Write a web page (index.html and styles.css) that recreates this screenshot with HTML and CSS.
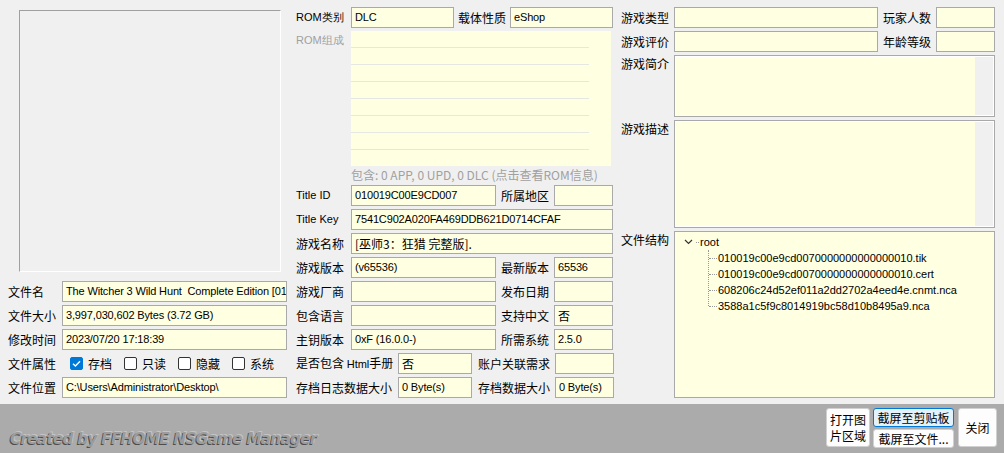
FILE: index.html
```html
<!DOCTYPE html>
<html>
<head>
	<meta name="viewport" content="width=device-width, initial-scale=1.0">
	<link rel="stylesheet" href="styles.css">
	<title>NSGame Manager</title>
</head>
<body>
	<div class="main">
		<!-- left: picture and file info -->
		<div class="col-left">
			<div class="picture"></div>

			<div class="row">
				<span class="lbl lbl-left">文件名</span>
				<div class="field f-left">The Witcher 3 Wild Hunt&nbsp; Complete Edition [01</div>
			</div>
			<div class="row">
				<span class="lbl lbl-left">文件大小</span>
				<div class="field f-left">3,997,030,602 Bytes (3.72 GB)</div>
			</div>
			<div class="row">
				<span class="lbl lbl-left">修改时间</span>
				<div class="field f-left">2023/07/20 17:18:39</div>
			</div>
			<div class="row">
				<span class="lbl lbl-left">文件属性</span>
				<div class="checks">
					<label class="chk"><span class="box checked"><svg width="13" height="13" viewBox="0 0 13 13"><path d="M3 6.8 L5.4 9.1 L10 4.2" fill="none" stroke="#fff" stroke-width="1.4"/></svg></span>存档</label>
					<label class="chk"><span class="box"></span>只读</label>
					<label class="chk"><span class="box"></span>隐藏</label>
					<label class="chk"><span class="box"></span>系统</label>
				</div>
			</div>
			<div class="row">
				<span class="lbl lbl-left">文件位置</span>
				<div class="field f-left">C:\Users\Administrator\Desktop\</div>
			</div>
		</div>

		<!-- middle: rom info -->
		<div class="col-mid">
			<div class="row">
				<span class="lbl lbl-mid latin">ROM类别</span>
				<div class="field f-half">DLC</div>
				<span class="lbl lbl-pair">载体性质</span>
				<div class="field f-half">eShop</div>
			</div>
			<div class="rom-block">
				<span class="lbl lbl-mid latin grey">ROM组成</span>
				<div class="rom-list">
					<div class="rom-line"></div>
					<div class="rom-line"></div>
					<div class="rom-line"></div>
					<div class="rom-line"></div>
					<div class="rom-line"></div>
					<div class="rom-line"></div>
					<div class="rom-line"></div>
				</div>
			</div>
			<div class="rom-info">包含: 0 APP, 0 UPD, 0 DLC (点击查看ROM信息)</div>

			<div class="row">
				<span class="lbl lbl-mid latin">Title ID</span>
				<div class="field f-mid">010019C00E9CD007</div>
				<span class="lbl lbl-side">所属地区</span>
				<div class="field f-small"></div>
			</div>
			<div class="row">
				<span class="lbl lbl-mid latin">Title Key</span>
				<div class="field f-full">7541C902A020FA469DDB621D0714CFAF</div>
			</div>
			<div class="row">
				<span class="lbl lbl-mid">游戏名称</span>
				<div class="field f-full cjk">[巫师3：狂猎 完整版].</div>
			</div>
			<div class="row">
				<span class="lbl lbl-mid">游戏版本</span>
				<div class="field f-mid">(v65536)</div>
				<span class="lbl lbl-side">最新版本</span>
				<div class="field f-small">65536</div>
			</div>
			<div class="row">
				<span class="lbl lbl-mid">游戏厂商</span>
				<div class="field f-mid"></div>
				<span class="lbl lbl-side">发布日期</span>
				<div class="field f-small"></div>
			</div>
			<div class="row">
				<span class="lbl lbl-mid">包含语言</span>
				<div class="field f-mid"></div>
				<span class="lbl lbl-side">支持中文</span>
				<div class="field f-small cjk">否</div>
			</div>
			<div class="row">
				<span class="lbl lbl-mid">主钥版本</span>
				<div class="field f-mid">0xF (16.0.0-)</div>
				<span class="lbl lbl-side">所需系统</span>
				<div class="field f-small">2.5.0</div>
			</div>
			<div class="row">
				<span class="lbl lbl-wide">是否包含 <span class="latin">Html</span>手册</span>
				<div class="field f-tiny cjk">否</div>
				<span class="lbl lbl-side2">账户关联需求</span>
				<div class="field f-small"></div>
			</div>
			<div class="row">
				<span class="lbl lbl-wide">存档日志数据大小</span>
				<div class="field f-tiny">0 Byte(s)</div>
				<span class="lbl lbl-side2">存档数据大小</span>
				<div class="field f-small">0 Byte(s)</div>
			</div>
		</div>

		<!-- right: game info and file tree -->
		<div class="col-right">
			<div class="row">
				<span class="lbl lbl-right">游戏类型</span>
				<div class="field f-right"></div>
				<span class="lbl lbl-right2">玩家人数</span>
				<div class="field f-small"></div>
			</div>
			<div class="row">
				<span class="lbl lbl-right">游戏评价</span>
				<div class="field f-right"></div>
				<span class="lbl lbl-right2">年龄等级</span>
				<div class="field f-small"></div>
			</div>
			<div class="area-row intro">
				<span class="lbl lbl-right">游戏简介</span>
				<div class="memo"><div class="scroll"></div></div>
			</div>
			<div class="area-row desc">
				<span class="lbl lbl-right">游戏描述</span>
				<div class="memo"><div class="scroll"></div></div>
			</div>
			<div class="area-row tree-row">
				<span class="lbl lbl-right">文件结构</span>
				<div class="tree">
					<div class="node-root">
						<svg class="chev" width="9" height="6" viewBox="0 0 9 6"><path d="M1 1 L4.5 4.5 L8 1" fill="none" stroke="#333" stroke-width="1.2"/></svg>
						<span class="dots-short"></span>root
					</div>
					<ul class="children">
						<li>010019c00e9cd0070000000000000010.tik</li>
						<li>010019c00e9cd0070000000000000010.cert</li>
						<li>608206c24d52ef011a2dd2702a4eed4e.cnmt.nca</li>
						<li>3588a1c5f9c8014919bc58d10b8495a9.nca</li>
					</ul>
				</div>
			</div>
		</div>
	</div>

	<div class="footer">
		<div class="credit">Created by FFHOME NSGame Manager</div>
		<div class="buttons">
			<button class="btn btn-open">打开图<br>片区域</button>
			<div class="btn-stack">
				<button class="btn btn-shot focused">截屏至剪贴板</button>
				<button class="btn btn-shot">截屏至文件...</button>
			</div>
			<button class="btn btn-close">关闭</button>
		</div>
	</div>
</body>
</html>
```

FILE: styles.css
```css
*{
	margin: 0;
	padding: 0;
	box-sizing: border-box;
}
body{
	background-color: #f0f0f0;
	font-family: "Noto Sans CJK SC", "Liberation Sans", sans-serif;
	font-size: 12px;
	color: #000;
	width: 1004px;
	height: 453px;
	overflow: hidden;
}
.main{
	display: flex;
	height: 404px;
}
.col-left{
	width: 288px;
	padding-left: 8px;
}
.col-mid{
	width: 317px;
	margin-left: 8px;
	padding-top: 7px;
}
.col-right{
	width: 374px;
	margin-left: 8px;
	padding-top: 7px;
}
.picture{
	width: 262px;
	height: 262px;
	margin: 10px 0 9px 11px;
	border-left: 1px solid #a0a0a0;
	border-top: 1px solid #a0a0a0;
	border-right: 1px solid #fff;
	border-bottom: 1px solid #fff;
}
.row{
	display: flex;
	align-items: center;
	height: 21px;
	margin-bottom: 3px;
}
.lbl{
	white-space: nowrap;
	line-height: 21px;
	flex-shrink: 0;
}
.latin{
	font-family: "Liberation Sans", sans-serif;
	font-size: 11px;
}
.lbl .latin{
	font-size: 11px;
}
.grey{
	color: #a0a0a0;
}
.lbl-left{ width: 54px; }
.lbl-mid{ width: 55px; }
.lbl-pair{ width: 56px; padding-left: 4px; }
.lbl-side{ width: 58px; padding-left: 5px; }
.lbl-wide{ width: 102px; }
.lbl-side2{ width: 83px; padding-left: 6px; }
.lbl-right{ width: 53px; }
.lbl-right2{ width: 58px; padding-left: 5px; }

.field{
	height: 21px;
	background: #ffffe1;
	border: 1px solid #a9a9a9;
	padding-left: 3px;
	font-family: "Liberation Sans", sans-serif;
	font-size: 11px;
	letter-spacing: -0.15px;
	line-height: 19px;
	white-space: nowrap;
	overflow: hidden;
	flex-shrink: 0;
}
.field.cjk{
	font-family: "Noto Sans CJK SC", sans-serif;
	font-size: 12px;
	letter-spacing: 0;
}
.f-left{ width: 225px; }
.f-half{ width: 103px; }
.f-mid{ width: 145px; }
.f-full{ width: 262px; }
.f-small{ width: 59px; }
.f-tiny{ width: 74px; }
.f-right{ width: 204px; }

/* rom list */
.rom-block{
	display: flex;
	height: 135px;
}
.rom-block .lbl{
	align-self: flex-start;
	line-height: 18px;
}
.rom-list{
	width: 260px;
	height: 135px;
	background: #ffffe1;
	padding-top: 16px;
}
.rom-line{
	width: 238px;
	height: 17px;
	border-top: 1px solid #e6e6e2;
}
.rom-info{
	height: 19px;
	padding-left: 55px;
	color: #a0a0a0;
	line-height: 17px;
	white-space: nowrap;
}

/* memo boxes */
.area-row{
	display: flex;
	margin-bottom: 3px;
}
.area-row .lbl{
	line-height: 18px;
}
.intro{ height: 62px; }
.desc{ height: 108px; }
.tree-row{ height: 167px; }
.memo{
	flex: 0 0 321px;
	border: 1px solid #a9a9a9;
	box-shadow: inset 0 0 0 1px #fff;
	background: #ffffe1;
	display: flex;
	justify-content: flex-end;
	padding: 1px;
}
.scroll{
	width: 18px;
	background: #f0f0f0;
}

/* file tree */
.tree{
	flex: 0 0 321px;
	background: #ffffe1;
	border: 1px solid #a9a9a9;
	font-family: "Liberation Sans", sans-serif;
	font-size: 11px;
	padding: 2px 0 0 9px;
}
.node-root{
	display: flex;
	align-items: center;
	height: 16px;
	line-height: 16px;
}
.chev{
	margin-right: 3px;
}
.dots-short{
	width: 3px;
	margin-right: 1px;
	border-top: 1px dotted #999;
}
.children{
	list-style: none;
	margin-left: 24px;
	border-left: 1px dotted #999;
	width: 280px;
}
.children li{
	height: 16px;
	line-height: 16px;
	display: flex;
	align-items: center;
	white-space: nowrap;
}
.children li::before{
	content: "";
	width: 8px;
	margin-right: 1px;
	border-top: 1px dotted #999;
}
.children li:last-child{
	background: linear-gradient(#ffffe1, #ffffe1) 0 9px / 1px 7px no-repeat;
	margin-left: -1px;
	padding-left: 1px;
}

/* footer */
.footer{
	height: 49px;
	background: #ababab;
	display: flex;
	align-items: flex-start;
	justify-content: space-between;
	padding: 4px 7px 0 10px;
}
.credit{
	font-family: "DejaVu Sans", sans-serif;
	font-weight: bold;
	font-style: italic;
	font-size: 15.2px;
	letter-spacing: -0.7px;
	color: #9c9c9c;
	text-shadow: -1px 1px 0 #4d4d4d, 1px -1px 0 #c4c4c4;
	margin-top: 22px;
}
.buttons{
	display: flex;
	gap: 3px;
}
.btn{
	background: #fdfdfd;
	border: 1px solid #d0d0d0;
	border-radius: 3px;
	font-family: "Noto Sans CJK SC", sans-serif;
	font-size: 12px;
	line-height: 16px;
	color: #000;
}
.btn-open{
	width: 44px;
	height: 39px;
}
.btn-stack{
	display: flex;
	flex-direction: column;
	gap: 2px;
}
.btn-shot{
	width: 81px;
	height: 19px;
	line-height: 14px;
}
.btn-shot.focused{
	background: #e5f1fb;
	border-color: #0078d7;
}
.btn-close{
	width: 39px;
	height: 39px;
	margin-left: 1px;
}

/* checkboxes */
.checks{
	display: flex;
	padding-left: 8px;
}
.chk{
	display: flex;
	align-items: center;
	margin-right: 12px;
}
.box{
	width: 13px;
	height: 13px;
	border: 1px solid #333;
	border-radius: 2px;
	background: #fff;
	margin-right: 5px;
	display: flex;
}
.box.checked{
	background: #0078d7;
	border-color: #0078d7;
}
.box svg{
	margin: -1px;
}
```
